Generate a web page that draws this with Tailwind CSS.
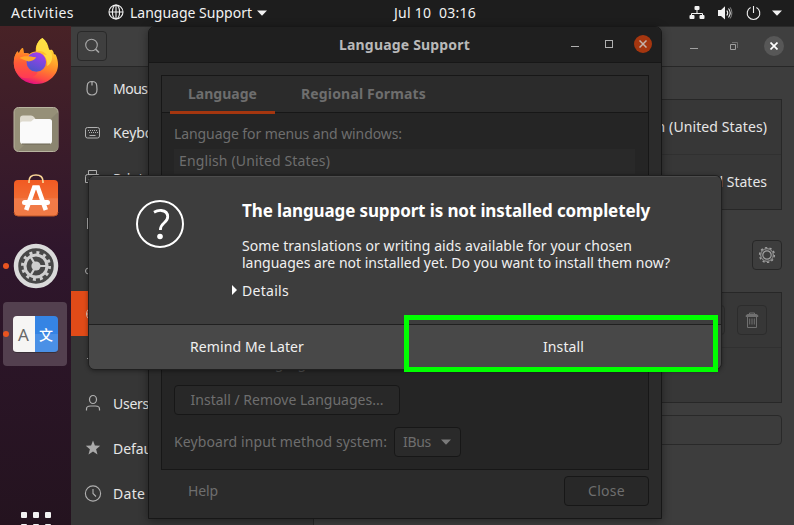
<!DOCTYPE html>
<html lang="en">
<head>
<meta charset="utf-8">
<title>Language Support</title>
<script src="https://cdn.jsdelivr.net/npm/@tailwindcss/browser@4"></script>
</head>
<body class="relative flex h-[525px] w-[794px] flex-col overflow-hidden bg-[#1d1d1d] font-['Noto_Sans','Open_Sans',sans-serif] text-[14px] leading-[18px] text-[#e6e6e6]">

<!-- top bar -->
<header class="flex h-[26px] shrink-0 items-center bg-[#1d1d1d] pl-[11px] pr-3 text-[#f2f2f2] whitespace-nowrap">
  <span data-w="63">Activities</span>
  <svg class="ml-[34px] shrink-0 -mt-[2px]" width="16" height="16" viewBox="0 0 16 16" fill="none" stroke="#f2f2f2" stroke-width="1.1"><circle cx="8" cy="8" r="7"/><ellipse cx="8" cy="8" rx="3.6" ry="7"/><path d="M8 1v14M1 8h14"/></svg>
  <span class="ml-[6px]" data-w="122">Language Support</span>
  <svg class="ml-[5px] shrink-0" width="10" height="6"><path d="M0 0.5h10L5 5.8z" fill="#f2f2f2"/></svg>
  <span class="ml-[127px] whitespace-pre" data-w="82">Jul 10  03:16</span>
  <div class="ml-auto -mt-[1px] flex items-center">
    <svg width="16" height="16" viewBox="0 0 16 16"><path d="M8 4v5M2.5 12V8.5h11V12" fill="none" stroke="#f2f2f2"/><rect x="5.5" y="1" width="5" height="4" rx="1" fill="#f2f2f2"/><rect x="0.5" y="10" width="5" height="4" rx="1" fill="#f2f2f2"/><rect x="10.5" y="10" width="5" height="4" rx="1" fill="#f2f2f2"/></svg>
    <svg class="ml-[12px]" width="16" height="16" viewBox="0 0 16 16"><path d="M1 5h3l4-3.8v13.2L4 11H1z" fill="#f2f2f2"/><path d="M9.8 5.5q1.8 2.3 0 5M11.5 3.5q3.4 4 0 9" fill="none" stroke="#f2f2f2" stroke-width="1.1"/><path d="M13.2 2.3q3.4 5.4 0 11.2" fill="none" stroke="#909090" stroke-width=".9"/></svg>
    <svg class="ml-[13px]" width="15" height="16" viewBox="0 0 15 16" fill="none" stroke="#f2f2f2" stroke-width="1.1"><path d="M4.6 2.6a6.3 6.3 0 1 0 5.8 0M7.5 1v7"/></svg>
    <svg class="ml-[11px]" width="10" height="6"><path d="M0 0.5h10L5 5.8z" fill="#f2f2f2"/></svg>
  </div>
</header>

<div class="flex min-h-0 grow">
  <!-- dock -->
  <nav class="flex w-[71px] shrink-0 flex-col items-center bg-linear-to-b from-[#482226] via-[#2f162c] via-45% to-[#24131f] pt-[11px]">
    <svg class="shrink-0" width="46" height="48" viewBox="0 0 46 48">
      <defs>
        <linearGradient id="fx" x1=".75" y1="0" x2=".45" y2="1"><stop offset="0" stop-color="#fff44f"/><stop offset=".3" stop-color="#ffc42e"/><stop offset=".6" stop-color="#ff8a2a"/><stop offset=".85" stop-color="#ff4a45"/><stop offset="1" stop-color="#e3117f"/></linearGradient>
        <linearGradient id="fp" x1=".7" y1="0" x2=".3" y2="1"><stop offset="0" stop-color="#a53df0"/><stop offset="1" stop-color="#4a55c8"/></linearGradient>
        <linearGradient id="fl" x1="0" y1="0" x2="0" y2="1"><stop offset="0" stop-color="#ff9a20"/><stop offset=".5" stop-color="#ff5a38"/><stop offset="1" stop-color="#ff3a55"/></linearGradient>
      </defs>
      <path d="M29.500 1c4 3 6 7 6.400 12l3-.2c.9.6 1.800 2.400 2 4.200l1.800.7c2.700 5.800 3.400 12.300.2 18.300C39 42.500 32 47 23.500 47 10.500 47 .8 37.500.8 25.500c0-5 1.600-8.500 3.600-11.200L6 16.500c.9-3 2.400-5.200 4-5.500l.8 5.200c2.200-.3 3.500.2 5.600.8 1.800-1.600 3.900-2.500 6.400-2.500C22.300 8.500 25.200 3.500 29.500 1z" fill="url(#fx)"/>
      <path d="M4.400 14.300L6 16.500c.9-3 2.400-5.200 4-5.500l.8 5.200c2.200-.3 3.500.2 5.600.8-2 2-2.800 5-2.700 8 .3 6 5 10.300 11 10.300-3 5.700-10 6.700-16 5.200C3 36.500.8 31.500.8 25.500c0-5 1.600-8.500 3.600-11.200z" fill="url(#fl)"/>
      <circle cx="23.300" cy="25" r="9.800" fill="url(#fp)"/>
      <path d="M6.500 21c4-3 10-1.500 16.700-.8-1.300 2.800-4.700 3.700-7.500 4.300-3-.6-6-2.500-9.200-3.500z" fill="#ffa52a"/>
      <path d="M24 14.600c3.400-1.400 7.500.2 10 3.700-1.300-.8-2.700-1-4-.7 3.200 2.700 4.800 7 4.200 11.400 4.500-2.500 6.600-9 3.500-14.500C35 10 31.500 6 29.500 1c-4.300 2.500-7.200 7.500-5.500 13.600z" fill="#ffdf45" opacity=".85"/>
    </svg>
    <svg class="mt-[21px] shrink-0" width="46" height="48" viewBox="0 0 46 48">
      <rect x="1" y="1.500" width="44" height="44" rx="4.500" fill="#969078" stroke="#b9b4a0"/><path d="M5 45L45 6v35q0 4-4.500 4z" fill="#8b8570"/>
      <path d="M7 12.500q0-3 3-3h8q2 0 3 1.500l1.500 2V24H7z" fill="#dedace"/><path d="M7 18q0-2.500 2.500-2.500h8.500l3-2.500h15.500q2.500 0 2.500 2.500v19.500q0 3-3 3H10q-3 0-3-3z" fill="#fafafa"/><path d="M9 38h28" stroke="#6c6754"/>
    </svg>
    <svg class="mt-[20px] shrink-0" width="46" height="46" viewBox="0 0 46 46">
      <defs><linearGradient id="sw" x1="0" y1="0" x2="0" y2="1"><stop offset="0" stop-color="#f15a22"/><stop offset=".5" stop-color="#f16b32"/><stop offset=".52" stop-color="#f27a48"/><stop offset="1" stop-color="#ef7a45"/></linearGradient></defs>
      <rect x="1" y="6" width="44" height="36" rx="4" fill="url(#sw)"/><path d="M1 38q0 4 4 4h36q4 0 4-4" fill="none" stroke="#bf5427"/>
      <path d="M16 9V7.500Q16 1 23 1t7 6.500V9" fill="none" stroke="#f8d596" stroke-width="1.700"/>
      <path d="M13.200 36l8-22.500h3.600l8 22.500" fill="none" stroke="#fff" stroke-width="4.600"/><rect x="9" y="26" width="28" height="5" rx="2.500" fill="#fff"/>
    </svg>
    <div class="relative mt-[23px] h-[46px] shrink-0">
      <i class="absolute -left-[10px] top-[20px] size-[6px] rounded-full bg-[#e95420]"></i>
      <svg width="46" height="46" viewBox="0 0 46 46"><circle cx="23" cy="23" r="20" fill="#484848" stroke="#dadada" stroke-width="4.500"/><circle cx="23" cy="23" r="11" fill="none" stroke="#cfcfcf" stroke-width="3"/><circle cx="23" cy="23" r="13.500" fill="none" stroke="#cfcfcf" stroke-width="3" stroke-dasharray="3 4.070"/><circle cx="23" cy="23" r="4.600" fill="#cfcfcf"/><path d="M23 23h11M23 23l-5.500-9.500M23 23l-5.500 9.500" stroke="#cfcfcf" stroke-width="2.200"/></svg>
    </div>
    <div class="relative mt-[13px] mr-[1px] flex size-[64px] shrink-0 items-center justify-center rounded-[4px] bg-[#53404f]">
      <i class="absolute left-0 top-[29px] size-[6px] rounded-full bg-[#e95420]"></i>
      <div class="flex h-[37px] w-[45px] overflow-hidden rounded-[4px] border-b border-[#3a3038] text-center">
        <span class="w-[22px] bg-[#f6f5f4] text-[17px] leading-[38px] text-[#686868]">A</span>
        <span class="flex w-[23px] items-center justify-center bg-linear-to-b from-[#3584e4] from-50% to-[#4a90e6] to-50% font-['Noto_Sans_CJK_SC',sans-serif] text-[14px] font-medium text-white">文</span>
      </div>
    </div>
    <div class="mt-[146px] grid grid-cols-3 gap-[6px] shrink-0">
      <i class="size-[6px] rounded-[1px] bg-[#f2f2f2]"></i><i class="size-[6px] rounded-[1px] bg-[#f2f2f2]"></i><i class="size-[6px] rounded-[1px] bg-[#f2f2f2]"></i>
      <i class="size-[6px] rounded-[1px] bg-[#f2f2f2]"></i><i class="size-[6px] rounded-[1px] bg-[#f2f2f2]"></i><i class="size-[6px] rounded-[1px] bg-[#f2f2f2]"></i>
    </div>
  </nav>

  <!-- settings window -->
  <section class="flex min-w-0 grow flex-col border-t border-[#2a2a2a] bg-[#3d3d3d]">
    <div class="flex h-[40px] shrink-0 items-center border-b border-[#272727] bg-[#3f3f3f] pl-[6px] pr-[10px]">
      <div class="-mt-[1px] flex size-[30px] items-center justify-center rounded-[4px] border border-[#292929]">
        <svg width="16" height="16" viewBox="0 0 16 16" fill="none" stroke="#a8a8a8" stroke-width="1.100"><circle cx="7.500" cy="7" r="5.800"/><path d="M11.500 11.200l3.500 3.300" stroke-width="1.600"/></svg>
      </div>
      <div class="ml-auto -mt-[1px] flex items-center">
        <i class="mt-[5px] h-px w-[8px] bg-[#a0a0a0]"></i>
        <svg class="ml-[31px]" width="10" height="10" fill="none"><path d="M1.500 3.500h5v5h-5z" stroke="#a0a0a0"/><path d="M3 1.500h5.500V7" stroke="#707070"/></svg>
        <div class="ml-[25px] flex size-[20px] items-center justify-center rounded-full bg-[#575757]"><svg width="8" height="8"><path d="M.5.5l7 7M7.500.5l-7 7" stroke="#fff" stroke-width="1.700"/></svg></div>
      </div>
    </div>
    <div class="flex min-h-0 grow">
      <aside class="flex w-[243px] shrink-0 flex-col overflow-hidden border-r border-[#272727] bg-[#363636] -mt-[1px] border-t">
        <div class="flex h-[44px] shrink-0 items-center pl-[13px]"><svg class="-mt-[2px]" width="16" height="18" viewBox="0 0 16 18" fill="none" stroke="#b0b0b0" stroke-width="1.200"><path d="M8 2.500q4.500 0 4.700 4l.3 4q0 5.500-5 5.500t-5-5.500l.3-4Q3.500 2.500 8 2.500zM8 2.500v4"/></svg><span class="ml-[13px]" data-w="118">Mouse &amp; Touchpad</span></div>
        <div class="flex h-[45px] shrink-0 items-center pl-[14px]"><svg class="-mt-[2px]" width="16" height="12" viewBox="0 0 16 12" fill="none" stroke="#b0b0b0"><rect x=".5" y=".5" width="14" height="10.500" rx="2"/><path d="M3 3.500h10M4 5.500h9" stroke-dasharray="1 1"/><path d="M4.500 8.500h6"/></svg><span class="ml-[12px] -mt-[1px]" data-w="128">Keyboard Shortcuts</span></div>
        <div class="flex h-[45px] shrink-0 items-center pl-[14px]"><svg class="-mt-[1px]" width="16" height="16" viewBox="0 0 16 16" fill="none" stroke="#b0b0b0"><path d="M3.500 4.500v-4h8v4M3.500 12.500h-3v-6q0-2 2-2h11q1 0 1 2v6h-3M3.500 9.500h9v6h-9z"/></svg><span class="ml-[12px]" data-w="50">Printers</span></div>
        <div class="flex h-[45px] shrink-0 items-center pl-[16px]"><svg width="13" height="12" fill="none" stroke="#b0b0b0"><rect x=".5" y=".5" width="10" height="10"/></svg><span class="ml-[13px]">Removable Media</span></div>
        <div class="flex h-[45px] shrink-0 items-center pl-[13px]"><svg width="16" height="16" fill="none" stroke="#b0b0b0"><circle cx="4.500" cy="10" r="3"/></svg><span class="ml-[13px]">Color</span></div>
        <div class="flex h-[45px] shrink-0 items-center bg-[#e14b18] pl-[14px]"><svg width="16" height="16" fill="none" stroke="#e8c1b0"><circle cx="8" cy="8" r="6.500"/><path d="M1 8h14"/></svg><span class="ml-[13px]">Region &amp; Language</span></div>
        <div class="flex h-[45px] shrink-0 items-center pl-[16px]"><svg width="13" height="6" stroke="#b0b0b0"><path d="M0 2.500h10"/></svg><span class="ml-[13px]">Universal Access</span></div>
        <div class="flex h-[45px] shrink-0 items-center pl-[14px]"><svg class="-mt-[1px]" width="16" height="18" viewBox="0 0 16 18" fill="none" stroke="#b0b0b0" stroke-width="1.200"><ellipse cx="8" cy="5.500" rx="3.500" ry="4"/><path d="M1.500 16.500v-1.500q0-3 4-3h5q4 0 4 3v1.500"/></svg><span class="ml-[12px]" data-w="36">Users</span></div>
        <div class="flex h-[45px] shrink-0 items-center pl-[14px]"><svg class="-mt-[1px]" width="16" height="16" viewBox="0 0 16 16"><path d="M8 .5l1.900 5 5.300.3-4.100 3.400 1.400 5.300L8 11.500l-4.500 3L4.900 9.200.8 5.800l5.300-.3z" fill="#aaa"/></svg><span class="ml-[12px]" data-w="131">Default Applications</span></div>
        <div class="flex h-[45px] shrink-0 items-center pl-[13px]"><svg width="18" height="18" viewBox="0 0 18 18" fill="none" stroke="#b0b0b0" stroke-width="1.100"><circle cx="9" cy="8.500" r="7.600"/><path d="M9 4v4.500l3 3"/></svg><span class="ml-[11px]" data-w="84">Date &amp; Time</span></div>
      </aside>
      <main class="flex min-w-0 grow flex-col pl-[28px] pr-[12px] pt-[32px]">
        <div class="h-[111px] shrink-0 border border-[#272727] bg-[#373737] text-right">
          <div class="flex h-[55px] items-center justify-end border-b border-[#303030] pr-[14px]"><span data-w="150">English (United States)</span></div>
          <div class="flex h-[54px] items-center justify-end pr-[14px]"><span data-w="88">United States</span></div>
        </div>
        <div class="mt-[30px] flex size-[30px] shrink-0 items-center justify-center self-end rounded-[4px] border border-[#272727]">
          <svg width="18" height="18" viewBox="0 0 18 18" fill="none" stroke="#a0a0a0"><circle cx="9" cy="9" r="6.300"/><circle cx="9" cy="9" r="4.200" stroke-width="1.200"/><circle cx="9" cy="9" r="7.400" stroke-width="1.400" stroke-dasharray="2.300 2.350"/></svg>
        </div>
        <div class="mt-[22px] h-[111px] shrink-0 border border-[#272727] bg-[#373737]">
          <div class="flex h-[55px] items-center justify-end gap-[12px] border-b border-[#303030] pr-[14px]">
            <div class="size-[30px] rounded-[4px] border border-[#2c2c2c]"></div>
            <div class="flex size-[30px] items-center justify-center rounded-[4px] border border-[#2c2c2c]"><svg width="14" height="16" viewBox="0 0 14 16" fill="none" stroke="#707070"><path d="M4.500 3V1h5v2"/><path d="M1 4.500q0-2 2-2h8q2 0 2 2z" fill="#707070"/><path d="M2.500 4.500v11h9v-11M4.700 6.500v6M7 6.500v6M9.300 6.500v6"/></svg></div>
          </div>
        </div>
        <div class="mt-[12px] h-[30px] shrink-0 rounded-[4px] border border-[#292929] bg-[#3c3c3c]"></div>
      </main>
    </div>
  </section>
</div>

<!-- Language Support window -->
<section class="absolute left-[148px] top-[26px] flex h-[493px] w-[514px] flex-col overflow-hidden rounded-t-[7px] border border-[#171717] bg-[#2b2b2b] text-[#6e6e6e] shadow-[0_2px_10px_rgba(0,0,0,0.4)] whitespace-nowrap">
  <div class="relative flex h-[36px] shrink-0 items-center border-b border-[#171717] bg-[#1f1f1f] pr-[9px]">
    <b class="ml-[190px] text-[#b9b9b9]" data-w="131">Language Support</b>
    <i class="ml-auto mt-[3px] h-px w-[8px] bg-[#b0b0b0]"></i>
    <i class="ml-[26px] -mt-[1px] size-[8px] border border-[#b0b0b0]"></i>
    <div class="ml-[21px] -mt-[1px] flex size-[18px] items-center justify-center rounded-full bg-[#a5360f]"><svg width="8" height="8"><path d="M.5.5l7 7M7.500.5l-7 7" stroke="#c4b3ab" stroke-width="1.500"/></svg></div>
  </div>
  <div class="mx-[12px] mt-[12px] flex h-[395px] shrink-0 flex-col border border-[#171717] bg-[#252525]">
    <div class="flex h-[37px] shrink-0 items-center border-b border-[#171717] bg-[#2b2b2b] pl-[8px]">
      <div class="relative flex h-[37px] w-[105px] items-center justify-center"><b data-w="69">Language</b><i class="absolute bottom-[-1px] left-0 h-[3px] w-full bg-[#a5360f]"></i></div>
      <b class="ml-[26px]" data-w="125">Regional Formats</b>
    </div>
    <div class="flex flex-col items-start pl-[12px]">
      <span class="mt-[12px]" data-w="228">Language for menus and windows:</span>
      <div class="mt-[6px] flex h-[25px] w-[461px] items-center bg-[#292929] pb-[2px] pl-[5px]"><span data-w="151">English (United States)</span></div>
      <div class="mt-[180px] h-[18px] text-[#4c4c4c]"><span data-w="371">Use the same language choices for startup and the login screen</span></div>
      <div class="mt-[13px] flex h-[30px] w-[226px] items-center justify-center rounded-[4px] border border-[#171717] bg-[#282828]"><span data-w="193">Install / Remove Languages...</span></div>
      <div class="mt-[12px] flex items-center">
        <span data-w="213">Keyboard input method system:</span>
        <div class="ml-[7px] flex h-[30px] w-[67px] items-center rounded-[4px] border border-[#171717] bg-[#2a2a2a] pl-[8px]"><span data-w="28">IBus</span><svg class="ml-[10px]" width="10" height="6"><path d="M0 .5h10L5 5.800z" fill="#7a7a7a"/></svg></div>
      </div>
    </div>
  </div>
  <div class="mt-[6px] flex items-center justify-between pl-[39px] pr-[12px]">
    <span data-w="30">Help</span>
    <div class="flex h-[30px] w-[85px] items-center justify-center rounded-[4px] border border-[#171717] bg-[#282828]"><span data-w="37">Close</span></div>
  </div>
</section>

<!-- message dialog -->
<section class="absolute left-[88px] top-[175px] flex h-[195px] w-[634px] flex-col overflow-hidden rounded-[7px] border border-[#202020] bg-[#3d3d3d] text-[#f0f0f0] shadow-[0_1px_4px_rgba(0,0,0,0.4)] whitespace-nowrap">
  <div class="flex h-[149px] shrink-0 border-b border-[#202020] shadow-[inset_0_1px_0_#4d4d4d]">
    <svg class="ml-[47px] mt-[24px] shrink-0" width="48" height="48" viewBox="0 0 48 48" fill="none" stroke="#fff"><circle cx="24" cy="24" r="23" stroke-width="2"/><path d="M18 12.200q3.500-2 7.300-1.700 6.400.6 6.400 6.300 0 3.200-3.700 6.200-3.600 2.900-3.600 7" stroke-width="2.800"/><circle cx="24" cy="36.500" r="2.800" fill="#fff" stroke="none"/></svg>
    <div class="ml-[58px] flex flex-col items-start">
      <b class="mt-[24px] text-[17px] leading-[22px] text-white" data-w="408">The language support is not installed completely</b>
      <span class="mt-[15px] leading-[17px]" data-w="390">Some translations or writing aids available for your chosen</span>
      <span class="leading-[17px]" data-w="428">languages are not installed yet. Do you want to install them now?</span>
      <div class="mt-[11px] -ml-[10px] flex items-center"><svg class="mr-[5px] -mt-[2px]" width="5" height="10"><path d="M0 0l5 5-5 5z" fill="#fff"/></svg><span data-w="47">Details</span></div>
    </div>
  </div>
  <div class="flex grow bg-[#484848]">
    <div class="flex w-1/2 items-center justify-center border-r border-[#2a2a2a] pl-[1px]"><span data-w="114">Remind Me Later</span></div>
    <div class="flex w-1/2 items-center justify-center pl-[1px]"><span data-w="41">Install</span></div>
  </div>
</section>

<!-- highlight frame -->
<div class="absolute left-[404px] top-[315px] h-[57px] w-[314px] border-[5px] border-[#00ff00]"></div>

<script>
// Give each label its nominal width by spreading the difference over its letters.
function fitLabels() {
  document.querySelectorAll('[data-w]').forEach(function (el) {
    el.style.whiteSpace = 'pre';
    el.style.flexShrink = '0';
    var n = el.textContent.length, spacing = 0;
    el.style.letterSpacing = '0.001px';
    for (var i = 0; i < 4; i++) {
      var range = document.createRange();
      range.selectNodeContents(el);
      spacing += (+el.dataset.w - range.getBoundingClientRect().width) / n;
      el.style.letterSpacing = spacing + 'px';
    }
  });
}
fitLabels();
window.addEventListener('load', fitLabels);
document.fonts.ready.then(fitLabels);
</script>
</body>
</html>
